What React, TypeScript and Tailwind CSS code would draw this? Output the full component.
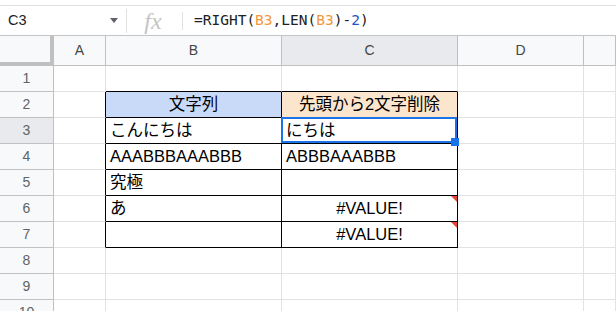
import React from 'react';

const COLS = ['A', 'B', 'C', 'D', 'E'];
const WIDTHS = ['w-[52px]', 'w-[176px]', 'w-[176px]', 'w-[126px]', 'flex-1'];
const ROWS = [1, 2, 3, 4, 5, 6, 7, 8, 9, 10];

type CellSpec = { text?: string; align?: 'left' | 'center'; bg?: string; error?: boolean };

const cells: Record<string, CellSpec> = {
  B2: { text: '文字列', align: 'center', bg: 'bg-[#c9daf8]' },
  C2: { text: '先頭から2文字削除', align: 'center', bg: 'bg-[#fce5cd]' },
  B3: { text: 'こんにちは' },
  C3: { text: 'にちは' },
  B4: { text: 'AAABBBAAABBB' },
  C4: { text: 'ABBBAAABBB' },
  B5: { text: '究極' },
  B6: { text: 'あ' },
  C6: { text: '#VALUE!', align: 'center', error: true },
  C7: { text: '#VALUE!', align: 'center', error: true },
};

const inTable = (r: number) => r >= 2 && r <= 7;

function Cell({ col, row, width }: { col: string; row: number; width: string }) {
  const spec = cells[col + row] || {};
  const tableCol = col === 'B' || col === 'C';
  const rightBlack = inTable(row) && (col === 'A' || tableCol);
  const bottomBlack = tableCol && row >= 1 && row <= 7;
  const selected = col === 'C' && row === 3;

  return (
    <div
      className={`relative h-[26px] shrink-0 ${width} flex items-center px-[4px] border-r border-b ${
        rightBlack ? 'border-r-black' : 'border-r-[#e2e2e2]'
      } ${bottomBlack ? 'border-b-black' : 'border-b-[#e2e2e2]'} ${spec.bg || 'bg-white'} ${
        spec.align === 'center' ? 'justify-center' : 'justify-start'
      } ${selected ? 'z-10' : ''}`}
    >
      {spec.text && <span className="whitespace-nowrap text-[16.5px] leading-[19px] text-black">{spec.text}</span>}
      {spec.error && (
        <span className="absolute top-0 right-0 w-0 h-0 border-l-[6px] border-l-transparent border-t-[6px] border-t-[#e8453c]" />
      )}
      {selected && (
        <>
          <span className="absolute -top-px -left-px right-0 bottom-0 border-2 border-[#1a73e8]" />
          <span className="absolute -right-[2px] -bottom-[3px] w-[8px] h-[8px] bg-[#1a73e8]" />
        </>
      )}
    </div>
  );
}

export default function App() {
  return (
    <div
      className="w-[616px] h-[311px] overflow-hidden bg-white"
      style={{ fontFamily: '"Liberation Sans", "Noto Sans CJK JP", Arial, sans-serif' }}
    >
      {/* Formula bar */}
      <div className="h-[6px] border-b border-[#e0e0e0]" />
      <div className="h-[30px] flex items-center border-b border-[#c4c4c4]">
        <div className="w-[126px] flex items-center justify-between pl-[8px] pr-[8px]">
          <span className="text-[14.5px] text-[#202124]">C3</span>
          <span className="w-0 h-0 border-x-[4px] border-x-transparent border-t-[5px] border-t-[#5f6368]" />
        </div>
        <div className="w-px h-[24px] bg-[#e0e0e0]" />
        <div className="w-[55px] flex justify-center pr-[3px]">
          <span className="italic text-[24px] leading-none text-[#c4c4c4]" style={{ fontFamily: '"Liberation Serif", serif' }}>
            fx
          </span>
        </div>
        <div className="w-px h-[18px] bg-[#e0e0e0]" />
        <div className="pl-[11px] text-[14.5px] text-[#202124] whitespace-nowrap" style={{ fontFamily: '"DejaVu Sans Mono", monospace' }}>
          =RIGHT(<span className="text-[#f4973b]">B3</span>,LEN(<span className="text-[#f4973b]">B3</span>)-<span className="text-[#1a56c8]">2</span>)
        </div>
      </div>

      {/* Column headers */}
      <div className="flex h-[30px]">
        <div className="w-[54px] shrink-0 bg-[#f8f9fa] border-r-4 border-b-4 border-[#c0c0c0]" />
        {COLS.map((c, i) => (
          <div
            key={c}
            className={`${WIDTHS[i]} shrink-0 flex items-center justify-center border-r border-b border-[#c0c0c0] text-[14px] text-[#444746] ${
              c === 'C' ? 'bg-[#e8eaed]' : 'bg-[#f8f9fa]'
            }`}
          >
            {c === 'E' ? '' : c}
          </div>
        ))}
      </div>

      {/* Rows */}
      {ROWS.map(r => (
        <div key={r} className="flex">
          <div
            className={`w-[54px] h-[26px] shrink-0 flex items-center justify-center border-r border-b border-[#c0c0c0] text-[14px] text-[#5f6368] ${
              r === 3 ? 'bg-[#e8eaed]' : 'bg-[#f8f9fa]'
            }`}
          >
            {r}
          </div>
          {COLS.map((c, i) => (
            <Cell key={c} col={c} row={r} width={WIDTHS[i]} />
          ))}
        </div>
      ))}
    </div>
  );
}
